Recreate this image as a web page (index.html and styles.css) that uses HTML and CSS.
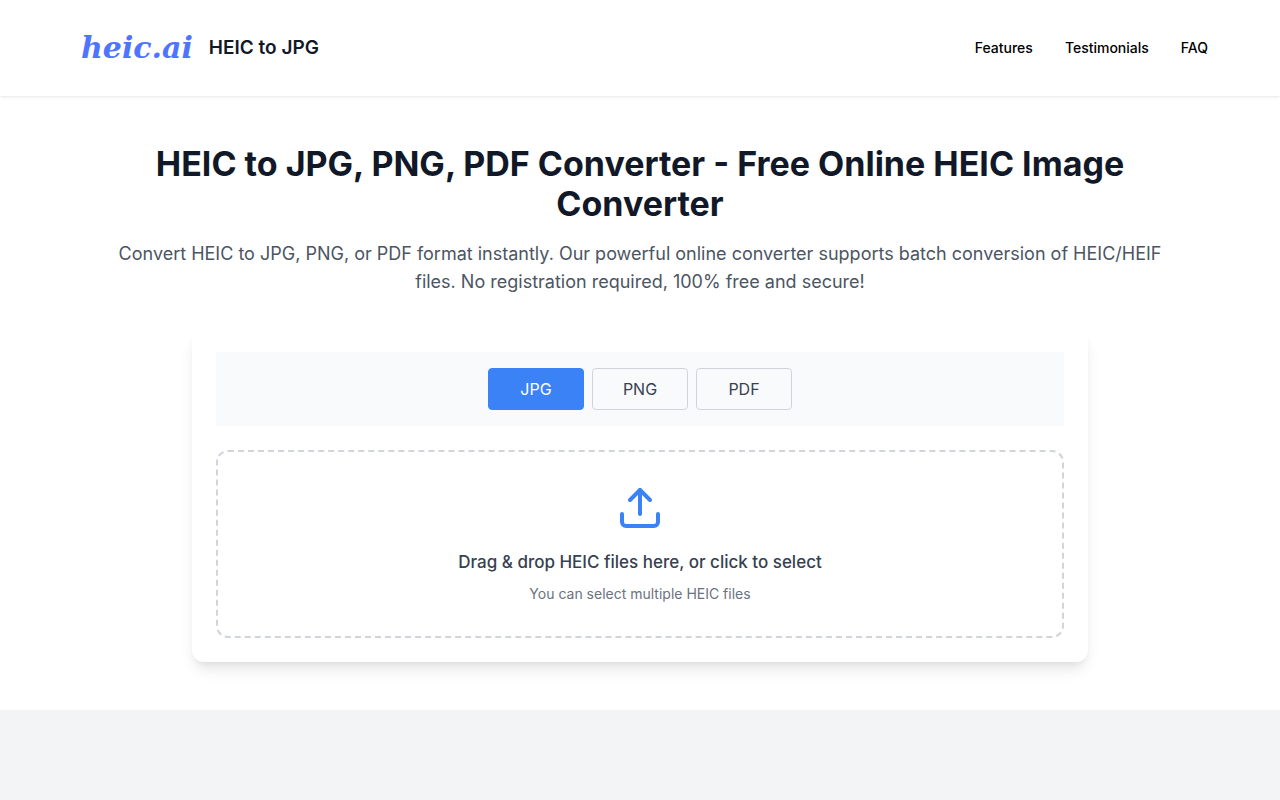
FILE: index.html
```
<!DOCTYPE html>
<html lang="en">
<head>
    <meta charset="UTF-8">
    <meta name="viewport" content="width=device-width, initial-scale=1">
    <title>HEIC to JPG</title>
    <link rel="stylesheet" href="styles.css">
</head>
<body>
    <header class="header">
        <div class="header-inner">
            <a class="brand" href="#">
                <span class="logo">heic.ai</span>
                <span class="brand-name">HEIC to JPG</span>
            </a>
            <nav class="nav">
                <a href="#features">Features</a>
                <a href="#testimonials">Testimonials</a>
                <a href="#faq">FAQ</a>
            </nav>
        </div>
    </header>

    <main class="hero">
        <h1>HEIC to JPG, PNG, PDF Converter - Free Online HEIC Image Converter</h1>
        <p class="intro">Convert HEIC to JPG, PNG, or PDF format instantly. Our powerful online converter supports batch conversion of HEIC/HEIF files. No registration required, 100% free and secure!</p>

        <div class="card">
            <div class="formats">
                <button type="button" class="format active">JPG</button>
                <button type="button" class="format">PNG</button>
                <button type="button" class="format">PDF</button>
            </div>
            <button type="button" class="dropzone">
                <svg class="upload-icon" viewBox="0 0 24 24" fill="none" stroke="currentColor" stroke-width="2" stroke-linecap="round" stroke-linejoin="round">
                    <path d="M3 15v4a2 2 0 0 0 2 2h14a2 2 0 0 0 2-2v-4"/>
                    <path d="M7 8l5-5 5 5"/>
                    <path d="M12 3v12"/>
                </svg>
                <span class="drop-title">Drag &amp; drop HEIC files here, or click to select</span>
                <span class="drop-hint">You can select multiple HEIC files</span>
            </button>
        </div>
    </main>

    <!-- features -->
    <section id="features" class="features"></section>
</body>
</html>
```

FILE: styles.css
```
* {
    box-sizing: border-box;
}

body, h1, p {
    margin: 0;
    padding: 0;
}

body {
    min-height: 100vh;
    display: flex;
    flex-direction: column;
    font-family: Inter, "Liberation Sans", sans-serif;
    background: #fff;
    color: #111827;
}

a {
    color: inherit;
    text-decoration: none;
}

button {
    font-family: inherit;
    cursor: pointer;
}

.header {
    background: #fff;
    box-shadow: 0 1px 3px rgba(0, 0, 0, 0.1);
}

.header-inner {
    max-width: 1280px;
    min-height: 96px;
    margin: 0 auto;
    padding: 0 72px;
    display: flex;
    align-items: center;
    justify-content: space-between;
}

.brand {
    display: flex;
    align-items: center;
    gap: 16px;
    padding-left: 9px;
}

.logo {
    font-family: "DejaVu Serif", serif;
    font-size: 30px;
    line-height: 48px;
    font-weight: bold;
    font-style: italic;
    color: #4f75ff;
}

.brand-name {
    font-size: 19px;
    line-height: 28px;
    font-weight: 600;
}

.nav {
    display: flex;
    gap: 32px;
    font-size: 14px;
    line-height: 20px;
    font-weight: 500;
    color: #000;
}

.hero {
    padding: 48px 96px;
    text-align: center;
}

.hero h1 {
    font-size: 34px;
    line-height: 40px;
    font-weight: 700;
}

.intro {
    margin-top: 16px;
    font-size: 18px;
    line-height: 28px;
    color: #4b5563;
}

.card {
    max-width: 896px;
    margin: 32px auto 0;
    padding: 24px;
    background: #fff;
    border-radius: 12px;
    box-shadow: 0 10px 15px -3px rgba(0, 0, 0, 0.1), 0 4px 6px -2px rgba(0, 0, 0, 0.05);
}

.formats {
    display: flex;
    justify-content: center;
    gap: 8px;
    padding: 16px;
    background: #f9fafb;
}

.format {
    width: 96px;
    padding: 8px 0;
    font-size: 16px;
    line-height: 24px;
    color: #374151;
    background: transparent;
    border: 1px solid #d1d5db;
    border-radius: 4px;
}

.format.active {
    color: #fff;
    background: #3b82f6;
    border-color: #3b82f6;
}

.dropzone {
    width: 100%;
    margin-top: 24px;
    padding: 32px;
    display: flex;
    flex-direction: column;
    align-items: center;
    background: transparent;
    border: 2px dashed #d1d5db;
    border-radius: 12px;
}

.upload-icon {
    width: 48px;
    height: 48px;
    color: #3b82f6;
}

.drop-title {
    margin-top: 16px;
    font-size: 17px;
    line-height: 28px;
    font-weight: 500;
    color: #374151;
}

.drop-hint {
    margin-top: 8px;
    font-size: 14px;
    line-height: 20px;
    color: #6b7280;
}

.features {
    flex: 1;
    background: #f3f4f6;
}
```
